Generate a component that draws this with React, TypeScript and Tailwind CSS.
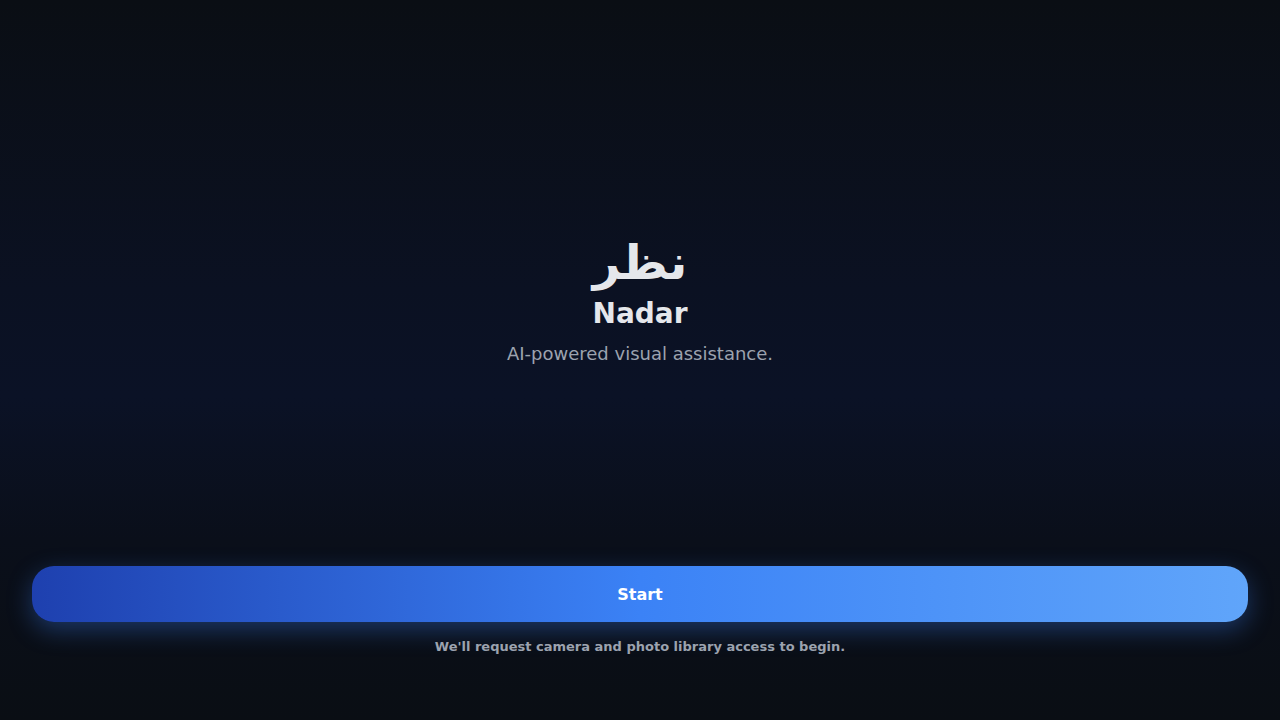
export default function App() {
  return (
    <div
      className="flex h-[720px] w-full flex-col bg-[linear-gradient(180deg,#0a0e14_0%,#0b1122_40%,#0b1226_55%,#0a0f1a_75%,#0a0e14_100%)]"
      style={{ fontFamily: '"DejaVu Sans", sans-serif' }}
    >
      <main className="flex flex-1 flex-col items-center justify-center pt-[35px]">
        <h1 className="text-[48px] font-bold leading-[56px] text-[#e5e7eb]" dir="rtl">
          نظر
        </h1>
        <h2 className="mt-[6px] text-[28px] font-bold leading-[36px] text-[#e5e7eb]">Nadar</h2>
        <p className="mt-[9px] text-[18px] leading-[26px] text-[#9ca3af]">AI-powered visual assistance.</p>
      </main>
      <footer className="flex flex-col items-center gap-[16px] px-8 pb-[64px]">
        <button className="h-[56px] w-full rounded-[22px] bg-[linear-gradient(90deg,#1e40af_0%,#3b82f6_50%,#60a5fa_100%)] pt-[2px] text-[16px] font-bold text-white shadow-[0_8px_24px_rgba(59,130,246,0.35)]">
          Start
        </button>
        <p className="text-[13px] font-bold leading-[18px] text-[#9ca3af]">
          We'll request camera and photo library access to begin.
        </p>
      </footer>
    </div>
  );
}
